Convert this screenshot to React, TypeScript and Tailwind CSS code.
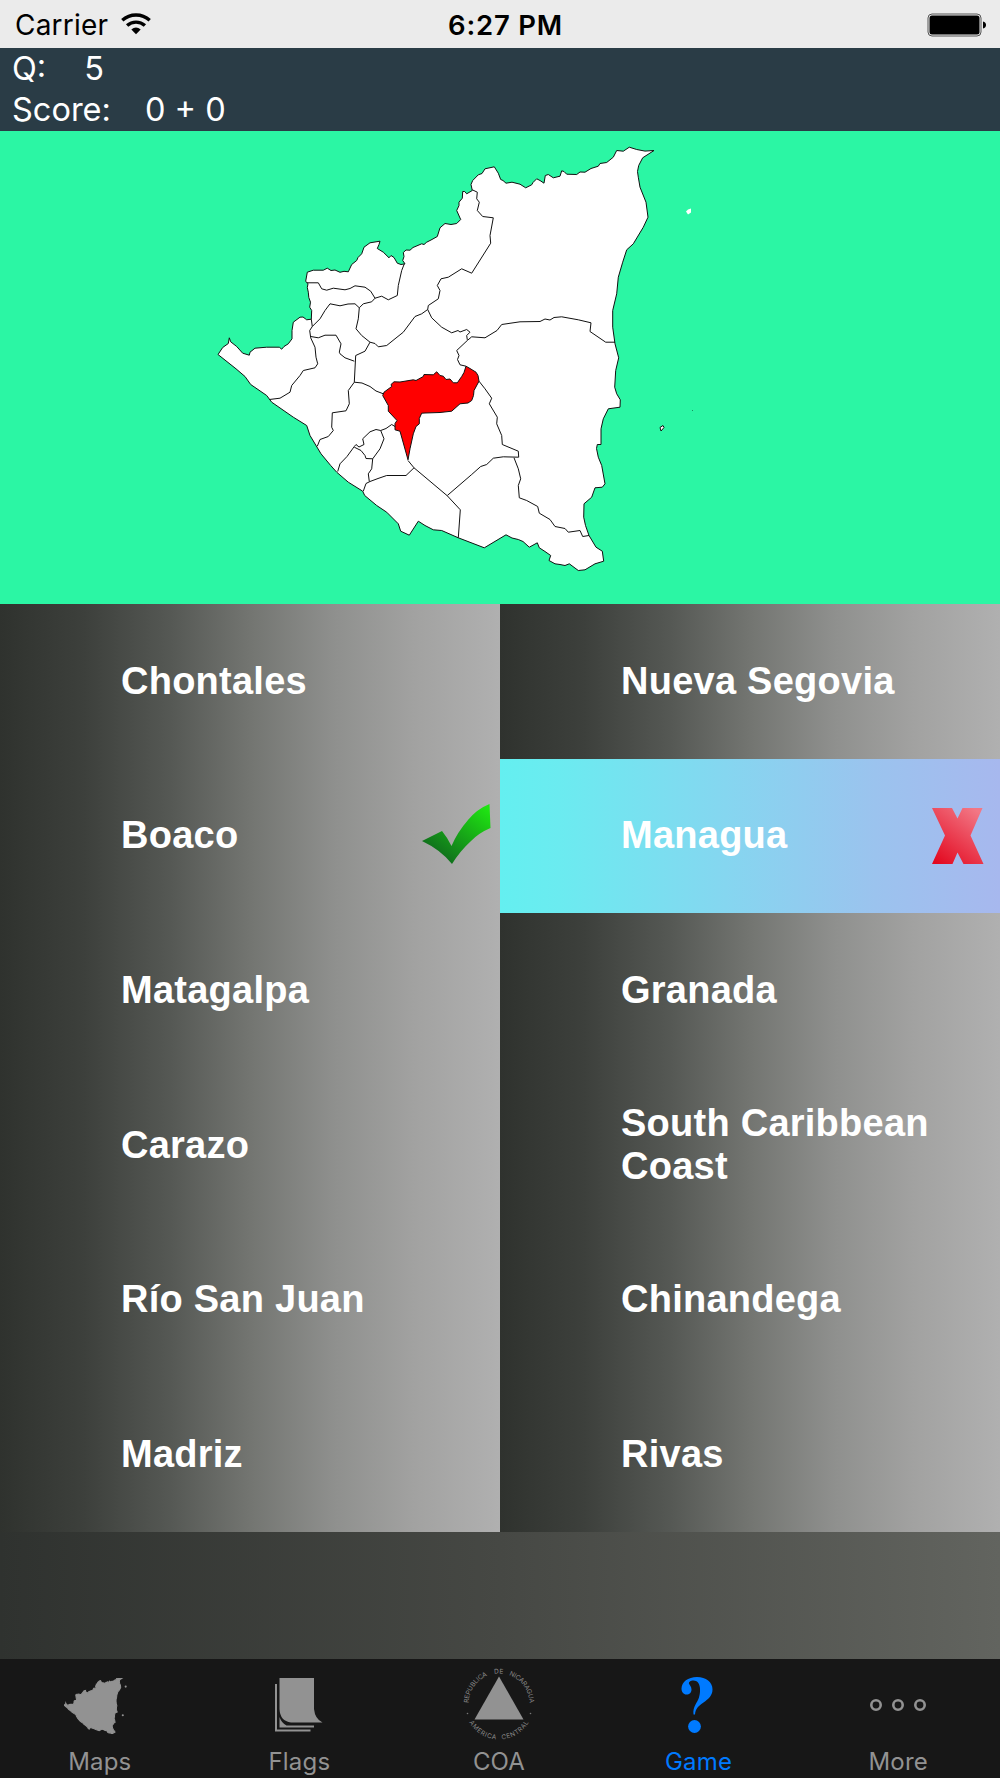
import { ReactNode } from 'react';

interface Answer {
  name: string;
  result?: 'correct' | 'wrong';
}

const ANSWERS: Answer[] = [
  { name: 'Chontales' },
  { name: 'Nueva Segovia' },
  { name: 'Boaco', result: 'correct' },
  { name: 'Managua', result: 'wrong' },
  { name: 'Matagalpa' },
  { name: 'Granada' },
  { name: 'Carazo' },
  { name: 'South Caribbean Coast' },
  { name: 'Río San Juan' },
  { name: 'Chinandega' },
  { name: 'Madriz' },
  { name: 'Rivas' },
];

const COUNTRY =
  '218,354 222.7,347 228.3,343 229.3,337.3 230.7,341.3 236.7,346 242.7,352.7 249.3,354.7 250,351.7 255,347.7 266.7,346.7 279.3,346.7 281.7,348.7 284,346 288.3,343.3 292,338.3 292,330 293.3,321.7 300,316.7 303,316.5 306.7,319.3 311.3,318.7 311.7,310 309.7,306.7 310.5,301.7 308.8,297 308.3,291.7 307.3,287 308,283.3 305.7,280.7 307.3,271.7 313.3,269.7 323.3,269.7 327.3,267.7 331,270 335,269.5 340,271.8 344,270.8 348.3,271.3 351.7,264 356.7,260 358,257 361.7,253.3 364,246.7 370,242.3 380,240.7 379,244 377.3,248 383.3,251.7 389,257.3 391,255 394,257 397.3,262.7 401,264 405,263.3 402.7,260 404,256 403.3,252 406,249.5 410,249.7 413,247 421.7,243.3 424,244 426.7,241.7 431,239.5 437.3,236 440,227.3 445,223 451,224 456.7,223 460.7,219 456.7,210 459,205 459,201.7 462.3,197.7 462.7,191 464.7,191 466.7,193.3 472.3,190 471,184 472.7,180 478.3,174.3 482,173 485,168.3 494.3,166.3 498.3,172.7 500.7,179 503,180 506,182.7 512,181.7 520,183.7 525.7,187.3 531.7,184.3 533,182 536.7,178.3 540,180 544,182.7 545.3,175 548.3,174 553.3,177.3 560,175.7 561.7,170.3 564,171 566.7,173.7 576.7,174 580,171.5 585,171.7 591,168 598.3,165.7 600,163 606.7,162 613.3,156.7 616.7,150 623.3,150.7 629.3,146.7 636.7,149 645,150.6 654,150 642.7,157.3 638.7,165 637.5,171 638.3,176.7 640,186.7 646,201.7 648,216.7 643.3,226.7 633.3,243.3 626.7,249.3 622.7,261.7 618.3,276.7 616.7,293.3 612.7,310 612.7,326.7 615,343.3 618.7,357.3 615.7,370 614.7,386.7 616.7,393.3 620.3,399.3 620,406.7 608.3,408.3 603.3,418.3 601,428.3 601,444 597.3,444 596.5,448 598.3,456.7 601.7,465 605,483.3 602.3,486.7 595,487.3 591.7,496.7 584,503.3 583.7,516.7 585.5,525 589,535 596,546.7 602.3,550.7 603.7,560.7 595,563.3 585,569.3 578.3,570 569.3,563.3 565,565 560,564 555,563.3 549,560 550.7,555 545,551 539.3,547.3 537.3,542.3 529.3,546.7 523,541 518.3,539 512,537.5 506,534.3 484.3,547.3 458.3,537.3 441.7,530 433.3,529.3 425,525 418.3,520.7 409.3,534.7 400.7,530.7 398.3,523.3 386.7,511.7 376.7,505 364.7,495 362.7,490.7 348.3,481.7 336.7,471.7 330.7,465 321,453.3 310,435 306.7,425 293.3,416.7 271.7,401.7 266.7,395 250.7,384 245,376 236,368.3';

const HIGHLIGHTED =
  '466,365.7 470,368 476,371.7 478,375 479,380.7 474,390 473.5,395 471.7,400 468,402.5 460,403.3 451.7,410.7 440,412 425,412.5 421.7,412.7 419.3,418 419.3,423.3 416,426 413.3,433.3 410,448.3 408,459.3 400,430.7 395,429.3 395,423 397,420 388.3,410.7 388.3,405 382.7,395 384,391.7 391.7,386 391,384 394,381.3 400,381.5 413.3,379.3 416,380 423.3,376 424,374 433.3,374.3 436.7,371.3 440,375 443.3,375.7 446,379 450,378.5 453.3,382.3 457.3,382.3 461.7,376 464,372';

const BORDERS = [
  '306.7,282.3 318.3,282.3 321.7,288.3 326.7,289.7 333.3,287.7 345,289.3 350,288 355,285.3 365,286.7 370.7,290.7 375,297.7 381.7,295.7 388.3,299.3 397.3,295 398.3,285 401.7,270 404.3,263.3',
  '375,297.7 371.7,301.3 363.3,303.3 359.3,307.3 355,303.3 348,303.5 340,305.3 330,303.3 325,310 320,318.3 312.3,326',
  '311.3,318.7 312.3,326 309.7,330 310.7,337.3 315,346.7 316,356.7 317.7,363.3 315,367.3 303.3,370 300,375 291.7,385 290,391.7 280,397.7 269.3,399',
  '310.7,336 318.3,337.3 325,334.7 336,334.7 341,343.3 339.3,351.7 340,353.3 345,357.3 354.3,360.7',
  '359.3,307.3 358.3,318.3 356,328.3 361.7,335 370,341.7 365,350.7 355.7,355 354.3,381.7',
  '370,341.7 375,343 378.3,346.3 386.7,345 395,338.3 403.3,331.7 415,316 421.7,313.3 427.7,309',
  '427.7,309 428.3,305 438.3,298.3 440,290 437.3,285 441,278.3 448.3,276.7 461.7,268.3 471.7,272.7 490.7,242.7 490,235 493.3,217.3 482.7,216 477.3,210 479.3,201.7 476.7,198.3 477.3,191.7 472.3,189.3',
  '427.7,309 431.7,317.3 441.7,326.7 451.7,332.3 458,330 460,331.5 466.7,329 470,331.7 466.7,335 467.3,339.3',
  '615,341.7 605.7,341.7 590,331 591,322.3 578.3,319.3 561.7,316.3 554,317 550,319.5 545,318.5 540,321 520,321.3 501.7,324 497,330 485,337.3 471.7,336.3 467.3,340 456.7,350 459,355 457.5,359 460,364.3 466,365.7',
  '479,380.7 485,388.3 491.7,397.7 489.3,403.3 497.3,416.7 496.7,423.3 501.7,435 502.3,444 518.3,450.7 518.7,456.7 503.3,456.3 493.3,457.7 486.7,464 480.7,466 471.7,474 447.3,495',
  '514,457.3 518.3,468.3 520.7,478.3 518.3,485 519.3,497.3 526.7,500 537.7,506 539.3,512.7 550,519 555,526 565,528 568.3,531.7 580,530 582.7,536 589,535',
  '408,460 414,467.3 447.3,495.3 460.3,509.3 458.3,537.3',
  '414,467.3 406,475 386.7,475 378,478 370,481 366,483 363.3,490.7',
  '380.7,430 384,438.3 380,448.3 372.7,458.3 371.7,468.3 368.3,473.3 369.3,481',
  '395,426 391.7,424 386,428 380.7,430 376,429 370,431.3 362.7,438.3 364,444 359,446.5 356,444 354.3,446 347,456 340,463.3 337.7,471',
  '354.3,446.7 361,450 365,455 366,458 372.7,458.3',
  '354.3,381.7 362,382.5 370,386 376,390.5 383.3,393.3',
  '354.3,381.7 348.3,390 349.3,403.3 346,410.3 332.3,412.3 331.7,426.7 333.3,430 328.3,436 320,439 317.3,445.7',
];

function StatusBar() {
  return (
    <div className="grid h-12 shrink-0 grid-cols-3 items-center bg-[#ebebeb] pt-0.5 pr-[13px] pl-[15px] text-[28px] text-black">
      <div className="flex items-center gap-[13px]">
        <span className="tracking-[0.2px]">Carrier</span>
        <svg className="mb-0.5" width="30" height="22" viewBox="0 0 30 22" fill="none" stroke="#000" strokeWidth="3.4">
          <path d="M1.3 7.2a20.5 20.5 0 0 1 27.4 0" />
          <path d="M6.1 12.6a13.2 13.2 0 0 1 17.8 0" />
          <path d="M15 21.3l-4.7-4.8a7.5 7.5 0 0 1 9.4 0z" fill="#000" stroke="none" />
        </svg>
      </div>
      <div className="pt-px pl-[9px] text-center text-[27.5px] font-semibold tracking-[0.8px] whitespace-nowrap">6:27 PM</div>
      <svg className="justify-self-end" width="60" height="24" viewBox="0 0 60 24">
        <rect x="1" y="1" width="53" height="22" rx="4" fill="none" stroke="#555" />
        <rect x="2.5" y="2.5" width="50" height="19" rx="2.5" />
        <path d="M56 8.5q3 .8 3 3.500t-3 3.500z" />
      </svg>
    </div>
  );
}

function MapView() {
  return (
    <svg className="block h-[473.5px] w-full shrink-0 bg-[#2bf6a4]" viewBox="0 130.5 1000 473.5">
      <g stroke="#111" strokeWidth="1" strokeLinejoin="round">
        <polygon points={COUNTRY} fill="#fff" />
        <polygon points={HIGHLIGHTED} fill="#f00" />
        {BORDERS.map(points => (
          <polyline key={points} points={points} fill="none" />
        ))}
        <path d="M660 427l3-2 1 2-3 3.500z" fill="#fff" />
      </g>
      <path d="M686 211l2-2 3-1v4l-3 2z" fill="#fff" />
      <path d="M692 410h1" stroke="#16935f" />
    </svg>
  );
}

function CheckMark() {
  return (
    <svg className="mr-[9px] mb-1 shrink-0" width="69" height="60" viewBox="422 804 69 60">
      <defs>
        <linearGradient id="check" x1="0.3" y1="0.9" x2="1" y2="0.1">
          <stop offset="0" stopColor="#10701c" />
          <stop offset="1" stopColor="#1fe612" />
        </linearGradient>
      </defs>
      <path
        d="M422 841l20-10q5 6 9.500 15 6-14 16.500-26 9-11 21.500-16l1 24q-12 5-20 13.500-10 9-18.500 22.500-11-14-30-23z"
        fill="url(#check)"
      />
    </svg>
  );
}

function CrossMark() {
  return (
    <svg className="mr-4 shrink-0" width="52" height="57" viewBox="932 807 52 57">
      <defs>
        <linearGradient id="cross" x1="0.1" y1="1" x2="0.8" y2="0">
          <stop offset="0" stopColor="#e3081f" />
          <stop offset="1" stopColor="#f27785" />
        </linearGradient>
      </defs>
      <path
        d="M932 808h20l5.500 10.500 5-10.500h20l-12 27.500 13 28.500h-20l-6-11.500-5 11.500h-20.500l13-28.500z"
        fill="url(#cross)"
      />
    </svg>
  );
}

function MapsIcon() {
  return (
    <svg className="mt-0.5 mr-[9px]" width="63" height="56" viewBox="216 146 480 426" fill="#929292">
      <polygon points={COUNTRY} stroke="#929292" strokeWidth="8" />
      <circle cx="686" cy="211" r="8" />
      <circle cx="664" cy="430" r="8" />
    </svg>
  );
}

function FlagsIcon() {
  return (
    <svg width="48" height="54" viewBox="0 0 48 54">
      <path d="M1 6v46.500h34.500" fill="none" stroke="#929292" strokeWidth="2" />
      <path d="M4.500 39q2 6 7 8.500H39v2H4.500z" fill="#929292" />
      <path d="M4.500 0H39v31q1 10 8.500 13.500H16Q5 43 4.500 31z" fill="#929292" />
    </svg>
  );
}

function CoaIcon() {
  return (
    <svg className="overflow-visible" width="80" height="76" viewBox="-4 -2 80 76">
      <defs>
        <path id="coa-top" d="M5.500 35a30.500 30.500 0 1 1 61 0" />
        <path id="coa-bottom" d="M1.500 36a34.500 34.500 0 0 0 69 0" />
      </defs>
      <path d="M36 7.500L60.500 50.500H11.500z" fill="#929292" />
      <g fill="#8a8a8a" fontSize="6.500">
        <text>
          <textPath href="#coa-top" startOffset="1" textLength="35">REPUBLICA</textPath>
        </text>
        <text>
          <textPath href="#coa-top" startOffset="43" textLength="9">DE</textPath>
        </text>
        <text>
          <textPath href="#coa-top" startOffset="58" textLength="37">NICARAGUA</textPath>
        </text>
        <text>
          <textPath href="#coa-bottom" startOffset="18" textLength="33">AMERICA</textPath>
        </text>
        <text>
          <textPath href="#coa-bottom" startOffset="57" textLength="33">CENTRAL</textPath>
        </text>
      </g>
      <circle cx="4.500" cy="44.500" r="0.800" fill="#777" />
      <circle cx="67.500" cy="44.500" r="0.800" fill="#777" />
    </svg>
  );
}

function QuestionIcon() {
  return (
    <svg className="mr-[3px] mb-px" width="32" height="56" viewBox="0 0 32 56" fill="#007aff">
      <path d="M12.500 37.500c-1-8 4-12 5.500-17 2-6 2-17-5.500-17-3 0-5 1.500-4.500 3 .5 1.500 2.500 3 2.500 6 0 3-2 5-5 5s-5-2.500-5-6C.5 5 7 0 16 0c9 0 15.500 5 15.500 12.500 0 6-4 9.500-9 13-5 3.500-8 6-8.500 12z" />
      <circle cx="13.500" cy="49.500" r="6.400" />
    </svg>
  );
}

function MoreIcon() {
  return (
    <svg width="56" height="12" viewBox="0 0 56 12" fill="none" stroke="#929292" strokeWidth="2.600">
      <circle cx="6" cy="6" r="4.700" />
      <circle cx="28" cy="6" r="4.700" />
      <circle cx="50" cy="6" r="4.700" />
    </svg>
  );
}

const TABS: { label: string; icon: ReactNode; active?: boolean }[] = [
  { label: 'Maps', icon: <MapsIcon /> },
  { label: 'Flags', icon: <FlagsIcon /> },
  { label: 'COA', icon: <CoaIcon /> },
  { label: 'Game', icon: <QuestionIcon />, active: true },
  { label: 'More', icon: <MoreIcon /> },
];

export default function App() {
  return (
    <div className="flex h-[1778px] w-[1000px] flex-col overflow-hidden bg-linear-to-r from-[#2f322f] via-[#464844] to-[#62645f] font-['Inter',sans-serif]">
      <StatusBar />

      {/* Score header */}
      <div className="h-[82.5px] shrink-0 bg-[#2a3c46] pl-3 text-[32.5px] leading-[41px] text-white">
        <div className="flex gap-[38px]">
          <span>Q:</span>
          <span>5</span>
        </div>
        <div className="flex gap-[34px]">
          <span>Score:</span>
          <span>0 + 0</span>
        </div>
      </div>

      <MapView />

      {/* Answers */}
      <div className="grid h-[928px] shrink-0 grid-cols-2 grid-rows-6 font-['Liberation_Sans',sans-serif] text-[38px] leading-[43px] font-bold text-white">
        {ANSWERS.map(answer => (
          <button
            key={answer.name}
            className={`flex items-center justify-between pl-[121px] text-left tracking-[0.25px] ${
              answer.result === 'wrong'
                ? 'bg-[linear-gradient(90deg,#64eff0_0%,#6bebf0_12%,#85d6f0_45%,#9bc3ee_75%,#a7b8ee_100%)]'
                : 'bg-[linear-gradient(90deg,#2f322e_0%,#3d403c_17%,#555854_34%,#737571_50%,#8f908e_67%,#a2a2a1_83%,#b0b0b0_100%)]'
            }`}
          >
            <span className="max-w-[320px]">{answer.name}</span>
            {answer.result === 'correct' && <CheckMark />}
            {answer.result === 'wrong' && <CrossMark />}
          </button>
        ))}
      </div>

      <div className="flex-1" />

      {/* Tab bar */}
      <div className="h-[119px] shrink-0 bg-[#171717]">
        <div className="grid w-[998px] grid-cols-5">
          {TABS.map(tab => (
            <button
              key={tab.label}
              className={`flex flex-col items-center text-[24px] leading-[28px] ${tab.active ? 'text-[#007aff]' : 'text-[#929292]'}`}
            >
              <span className="mt-[10px] flex h-[72px] items-center">{tab.icon}</span>
              <span className="mt-[7px] tracking-[0.2px]">{tab.label}</span>
            </button>
          ))}
        </div>
      </div>
    </div>
  );
}
